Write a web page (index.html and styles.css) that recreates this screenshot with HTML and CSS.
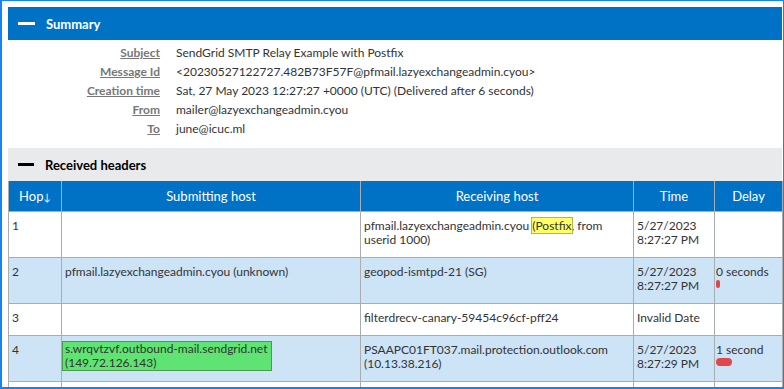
FILE: index.html
```html
<!DOCTYPE html>
<html>
<head>
<meta charset="utf-8">
<link rel="stylesheet" href="styles.css">
</head>
<body>
<div class="window">
  <section class="panel">
    <div class="panel-head summary-head"><span class="dash"></span><span class="title">Summary</span></div>
    <div class="summary-body">
      <div class="label">Subject</div><div class="value">SendGrid SMTP Relay Example with Postfix</div>
      <div class="label">Message Id</div><div class="value">&lt;20230527122727.482B73F57F@pfmail.lazyexchangeadmin.cyou&gt;</div>
      <div class="label">Creation time</div><div class="value">Sat, 27 May 2023 12:27:27 +0000 (UTC) (Delivered after 6 seconds)</div>
      <div class="label">From</div><div class="value">mailer@lazyexchangeadmin.cyou</div>
      <div class="label">To</div><div class="value">june@icuc.ml</div>
    </div>
  </section>
  <section class="panel">
    <div class="panel-head received-head"><span class="dash dark"></span><span class="title">Received headers</span></div>
    <table class="hops">
      <colgroup>
        <col class="c-hop"><col class="c-sub"><col class="c-rec"><col class="c-time"><col class="c-delay">
      </colgroup>
      <thead>
        <tr><th>Hop<span class="arrow">↓</span></th><th>Submitting host</th><th>Receiving host</th><th>Time</th><th>Delay</th></tr>
      </thead>
      <tbody>
        <tr>
          <td>1</td>
          <td></td>
          <td>pfmail.lazyexchangeadmin.cyou <span class="hl-yellow">(Postfix</span>, from userid 1000)</td>
          <td>5/27/2023<br>8:27:27 PM</td>
          <td class="delay"></td>
        </tr>
        <tr class="alt">
          <td>2</td>
          <td>pfmail.lazyexchangeadmin.cyou (unknown)</td>
          <td>geopod-ismtpd-21 (SG)</td>
          <td>5/27/2023<br>8:27:27 PM</td>
          <td class="delay">0 seconds<div class="bar" style="width:4px"></div></td>
        </tr>
        <tr>
          <td>3</td>
          <td></td>
          <td>filterdrecv-canary-59454c96cf-pff24</td>
          <td>Invalid Date</td>
          <td class="delay"></td>
        </tr>
        <tr class="alt">
          <td>4</td>
          <td class="green-cell"><span class="hl-green">s.wrqvtzvf.outbound-mail.sendgrid.net<br>(149.72.126.143)</span></td>
          <td>PSAAPC01FT037.mail.protection.outlook.com<br>(10.13.38.216)</td>
          <td>5/27/2023<br>8:27:29 PM</td>
          <td class="delay">1 second<div class="bar" style="width:16px"></div></td>
        </tr>
        <tr class="empty">
          <td></td>
          <td></td>
          <td></td>
          <td></td>
          <td class="delay"></td>
        </tr>
      </tbody>
    </table>
  </section>
</div>
</body>
</html>
```
FILE: styles.css
```css
html, body {
  margin: 0;
  padding: 0;
  background: #fff;
}
body {
  font-family: Lato, "Noto Sans", sans-serif;
  font-size: 12px;
  color: #333;
}
.window {
  box-sizing: border-box;
  width: 784px;
  height: 389px;
  overflow: hidden;
  border-left: 2px solid #1883ee;
  border-top: 1px solid #1883ee;
  border-right: 1px solid #1883ee;
  border-bottom: 2px solid #1883ee;
  padding: 6px 0 0 6px;
}
.panel {
  width: 774px;
}
.panel-head {
  display: flex;
  align-items: center;
  height: 33px;
  font-weight: bold;
  font-size: 13px;
}
.summary-head {
  background: #0072c6;
  color: #fff;
}
.received-head {
  background: #e9eaec;
  color: #000;
}
.dash {
  display: block;
  width: 17px;
  height: 3px;
  background: #fff;
  margin-left: 10px;
  margin-right: 11px;
}
.dash.dark {
  background: #000;
  width: 16px;
}
.summary-body {
  display: grid;
  grid-template-columns: 152px 1fr;
  column-gap: 16px;
  padding: 3px 0 10px;
  line-height: 19px;
}
.label {
  text-align: right;
  color: #777;
  font-weight: bold;
  text-decoration: underline;
}
.value {
  color: #333;
  white-space: nowrap;
}
.hops {
  border-collapse: collapse;
  width: 774px;
  table-layout: fixed;
  line-height: 14px;
}
.c-hop { width: 53px; }
.c-sub { width: 299px; }
.c-rec { width: 273px; }
.c-time { width: 81px; }
.c-delay { width: 68px; }
.hops th {
  background: #0072c6;
  color: #fff;
  font-weight: normal;
  font-size: 13px;
  height: 30px;
  padding: 0;
  border: 1px solid #a8adb2;
  border-top: none;
  text-align: center;
}
.arrow {
  font-size: 10px;
}
.hops td {
  border: 1px solid #a8adb2;
  padding: 7px 3px 10px;
  vertical-align: top;
  color: #333;
}
.hops td.delay {
  padding-left: 1px;
}
.hops td.green-cell {
  padding: 5px 3px 10px 0;
}
.hops tr.alt td {
  background: #cde3f6;
}
.hops tr.empty td {
  height: 20px;
}
.hl-yellow {
  background: #ffff66;
  outline: 1px solid #b5b54a;
}
.hl-green {
  display: block;
  box-sizing: border-box;
  width: 210px;
  background: #5fe372;
  border: 1px solid #4c9a50;
  padding: 0 0 0 2px;
}
.bar {
  height: 8px;
  border-radius: 4px;
  background: #e0474c;
  margin-top: 1px;
}
```
